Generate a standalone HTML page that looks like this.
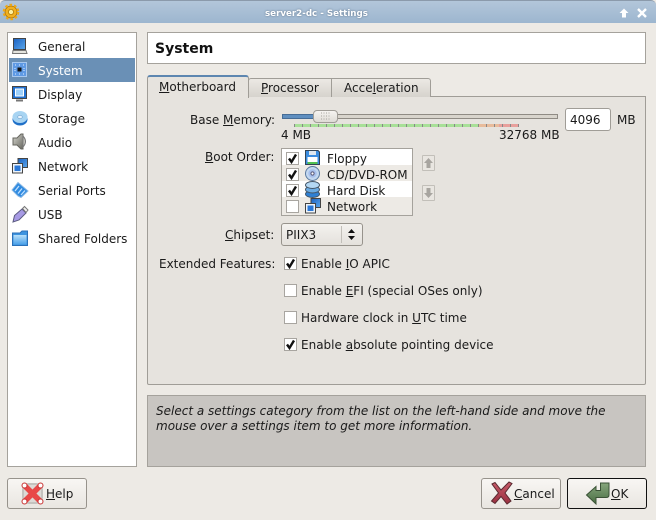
<!DOCTYPE html>
<html><head><meta charset="utf-8">
<style>
html,body{margin:0;padding:0}
body{width:656px;height:520px;position:relative;overflow:hidden;background:#edeae5;font-family:"DejaVu Sans",sans-serif;font-size:12px;color:#1a1a1a}
.a{position:absolute;white-space:nowrap;line-height:16px}
.b{position:absolute;box-sizing:border-box}
u{text-decoration:underline;text-underline-offset:1px}
svg{position:absolute;overflow:visible}
.cb{position:absolute;box-sizing:border-box;width:13px;height:13px;border:1px solid #a8a5a0;background:#fff}
.cb svg{left:0;top:0}
.btn{position:absolute;box-sizing:border-box;height:31px;width:80px;top:478px;border:1px solid #97938c;border-radius:3px;background:linear-gradient(#f8f6f3,#e9e6e1)}
</style></head><body>
<svg width="0" height="0" style="left:0;top:0"><defs>
<linearGradient id="bl" x1="0" y1="0" x2="0" y2="1"><stop offset="0" stop-color="#8cc4f4"/><stop offset="1" stop-color="#1668c8"/></linearGradient>
<linearGradient id="bl2" x1="0" y1="0" x2="1" y2="1"><stop offset="0" stop-color="#1a60c0"/><stop offset="1" stop-color="#5ca8ec"/></linearGradient>
<linearGradient id="gr" x1="0" y1="0" x2="1" y2="1"><stop offset="0" stop-color="#d8d8d0"/><stop offset="1" stop-color="#66665f"/></linearGradient>
<linearGradient id="fo" x1="0" y1="0" x2="0" y2="1"><stop offset="0" stop-color="#b8e0fa"/><stop offset="1" stop-color="#4aa0e8"/></linearGradient>
<linearGradient id="okg" x1="0" y1="0" x2="0" y2="1"><stop offset="0" stop-color="#86a67c"/><stop offset="1" stop-color="#4a6e44"/></linearGradient>
<linearGradient id="xr" x1="0" y1="0" x2="0" y2="1"><stop offset="0" stop-color="#c85a68"/><stop offset="1" stop-color="#983040"/></linearGradient>
</defs></svg>
<!-- title bar -->
<div class="b" style="left:0;top:0;width:656px;height:23px;background:linear-gradient(#b3c6da,#9db6cf);border-top:1px solid #8b9aab;border-radius:5px 5px 0 0"></div>
<div class="a" style="left:265px;top:7px;color:#fff;font-size:8.7px;font-weight:bold;line-height:14px;text-shadow:0 0 2px #5b7088">server2-dc - Settings</div>
<svg style="left:3px;top:4px" width="16" height="16" viewBox="0 0 16 16"><circle cx="8" cy="8" r="6" fill="#f0b020" stroke="#a86c00" stroke-width=".8"/><circle cx="8" cy="8" r="7.2" fill="none" stroke="#eca818" stroke-width="2.2" stroke-dasharray="2.6 2"/><circle cx="8" cy="8" r="2.6" fill="#fdf0a0" stroke="#b07800" stroke-width=".8"/></svg>
<svg style="left:619px;top:8px" width="10" height="10" viewBox="0 0 10 10"><path d="M5 .5L9.5 5H7V9.5H3V5H.5Z" fill="#fff"/></svg>
<svg style="left:637px;top:8px" width="10" height="10" viewBox="0 0 10 10"><path d="M1 1L9 9M9 1L1 9" stroke="#fff" stroke-width="2.4"/></svg>

<!-- left list -->
<div class="b" style="left:7px;top:32px;width:130px;height:435px;background:#fff;border:1px solid #a5a29c"></div>
<div class="b" style="left:9px;top:58px;width:126px;height:24px;background:#6a90b6"></div>
<div class="a" style="left:38px;top:39px">General</div>
<div class="a" style="left:38px;top:63px;color:#fff">System</div>
<div class="a" style="left:38px;top:87px">Display</div>
<div class="a" style="left:38px;top:111px">Storage</div>
<div class="a" style="left:38px;top:135px">Audio</div>
<div class="a" style="left:38px;top:159px">Network</div>
<div class="a" style="left:38px;top:183px">Serial Ports</div>
<div class="a" style="left:38px;top:207px">USB</div>
<div class="a" style="left:38px;top:231px">Shared Folders</div>
<!-- icons -->
<svg style="left:12px;top:38px" width="16" height="16" viewBox="0 0 16 16"><rect x="1.5" y=".5" width="12" height="11" fill="url(#bl2)" stroke="#444"/><path d="M1 12.5H14L15 15.5H.5Z" fill="#e4e4de" stroke="#777"/></svg>
<svg style="left:12px;top:62px" width="16" height="16" viewBox="0 0 16 16"><rect x=".5" y=".5" width="14" height="14" fill="#5f9ae4" stroke="#a8c8ee"/><rect x="5.5" y="5.5" width="4" height="4" fill="#111"/><path d="M3 3h2M7 3h2M11 3h1M3 12h2M7 12h2M11 12h1M3 6v4M12 6v4" stroke="#dfeeff" stroke-dasharray="1 1"/></svg>
<svg style="left:12px;top:86px" width="16" height="16" viewBox="0 0 16 16"><rect x=".5" y=".5" width="14" height="12" fill="#2070d0" stroke="#444"/><rect x="3.5" y="3" width="8" height="7" fill="#9ed0fa" stroke="#fff"/><path d="M4 14.5H11" stroke="#777" stroke-width="2"/></svg>
<svg style="left:12px;top:110px" width="16" height="16" viewBox="0 0 16 16"><ellipse cx="8" cy="9.5" rx="7.5" ry="6" fill="#1f70c8"/><ellipse cx="8" cy="7" rx="7.5" ry="6" fill="#a8d4f2"/><ellipse cx="8" cy="7" rx="2.2" ry="1.6" fill="#e8f4ff" stroke="#5a90c0" stroke-width=".5"/></svg>
<svg style="left:12px;top:133px" width="16" height="17" viewBox="0 0 16 17"><path d="M1 5H5L9 1H11V16H9L5 12H1Z" fill="url(#gr)" stroke="#66665f"/><path d="M11 3Q16 8.500 11 14Z" fill="#c8c8c0" stroke="#777"/></svg>
<svg style="left:12px;top:158px" width="16" height="16" viewBox="0 0 16 16"><rect x="6" y=".5" width="9.500" height="9" fill="url(#bl2)" stroke="#444"/><rect x=".5" y="5.500" width="10" height="9.500" fill="#eef4fa" stroke="#444"/><rect x="2.500" y="7.500" width="6" height="5.500" fill="#2a78d8"/></svg>
<svg style="left:12px;top:181px" width="17" height="18" viewBox="0 0 17 18"><path d="M0 9L6 1.500L16 10L9 16.500L6 15Z" fill="#2f8ae0" stroke="#8ab8e4"/><path d="M3 10L7 5M6 12.500L10 7.500M9 14L13 9.500" stroke="#bfe0ff" stroke-width="1.300"/></svg>
<svg style="left:12px;top:206px" width="16" height="17" viewBox="0 0 16 17"><path d="M1 16L2.500 9.500L10 3L14 7L7 14Z" fill="#a79ae4" stroke="#5a5a80"/><path d="M10.500 2.500L12.500 .5L16 4L14 6.500Z" fill="#f0f0f0" stroke="#777"/></svg>
<svg style="left:12px;top:230px" width="16" height="16" viewBox="0 0 16 16"><path d="M.5 3H8L10 1H15.500V15.500H.5Z" fill="#3d94e0" stroke="#2a70b8"/><rect x="1.500" y="5" width="13" height="9.500" fill="url(#fo)"/></svg>

<!-- header -->
<div class="b" style="left:147px;top:32px;width:499px;height:32px;background:#fff;border:1px solid #a5a29c"></div>
<div class="a" style="left:155px;top:41px;font-size:14px;font-weight:bold;color:#111">System</div>

<!-- tab panel -->
<div class="b" style="left:147px;top:96px;width:499px;height:289px;background:#e6e3de;border:1px solid #a09d97;border-radius:0 0 2px 2px"></div>
<div class="b" style="left:248px;top:78px;width:84px;height:19px;background:linear-gradient(#ece9e4,#d6d3cd);border:1px solid #a09d97;border-bottom:0;border-radius:3px 0 0 0"></div>
<div class="b" style="left:331px;top:78px;width:100px;height:19px;background:linear-gradient(#ece9e4,#d6d3cd);border:1px solid #a09d97;border-bottom:0;border-radius:0 3px 0 0"></div>
<div class="b" style="left:147px;top:75px;width:102px;height:23px;background:#e6e3de;border:1px solid #a09d97;border-top:2px solid #5d86b0;border-bottom:0;border-radius:3px 3px 0 0"></div>
<div class="a" style="left:159px;top:79px"><u>M</u>otherboard</div>
<div class="a" style="left:261px;top:80px"><u>P</u>rocessor</div>
<div class="a" style="left:344px;top:80px">Acce<u>l</u>eration</div>

<!-- memory -->
<div class="a" style="left:190px;top:112px">Base <u>M</u>emory:</div>
<div class="b" style="left:282px;top:114px;width:276px;height:5px;background:#d8d4cc;border:1px solid #8f8b84"></div>
<div class="b" style="left:282px;top:114px;width:34px;height:5px;background:#5f8fc0;border:1px solid #476d96"></div>
<div class="b" style="left:313px;top:110px;width:25px;height:13px;background:linear-gradient(#f6f4f1,#dedbd5);border:1px solid #a09d97;border-radius:4px"></div>
<svg style="left:320px;top:112px" width="10" height="9"><path d="M1 1h9M1 4h9M1 7h9" stroke="#a5a29c" stroke-dasharray="1 1.500"/></svg>
<div class="b" style="left:294px;top:124px;width:185px;height:3px;background:#a8e098"></div>
<div class="b" style="left:479px;top:124px;width:20px;height:3px;background:#e8bc9c"></div>
<div class="b" style="left:499px;top:124px;width:20px;height:3px;background:#e8a09c"></div>
<div class="b" style="left:294px;top:124px;width:225px;height:3px;background:repeating-linear-gradient(90deg,#888 0 1px,transparent 1px 8px)"></div>
<div class="a" style="left:281px;top:127px">4 MB</div>
<div class="a" style="left:499px;top:127px">32768 MB</div>
<div class="b" style="left:565px;top:108px;width:46px;height:23px;background:#fff;border:1px solid #a09d97;border-radius:3px"></div>
<div class="a" style="left:570px;top:112px">4096</div>
<div class="a" style="left:617px;top:112px">MB</div>

<!-- boot order -->
<div class="a" style="left:205px;top:149px"><u>B</u>oot Order:</div>
<div class="b" style="left:281px;top:148px;width:132px;height:68px;background:#fff;border:1px solid #a5a29c"></div>
<div class="b" style="left:282px;top:165px;width:130px;height:16px;background:#edeae5"></div>
<div class="b" style="left:282px;top:197px;width:130px;height:18px;background:#edeae5"></div>
<div class="cb" style="left:286px;top:152px"><svg width="11" height="11" viewBox="0 0 11 11"><path d="M2 5.500L4.500 9L9 1.500" fill="none" stroke="#111" stroke-width="2.400"/></svg></div>
<div class="cb" style="left:286px;top:168px"><svg width="11" height="11" viewBox="0 0 11 11"><path d="M2 5.500L4.500 9L9 1.500" fill="none" stroke="#111" stroke-width="2.400"/></svg></div>
<div class="cb" style="left:286px;top:184px"><svg width="11" height="11" viewBox="0 0 11 11"><path d="M2 5.500L4.500 9L9 1.500" fill="none" stroke="#111" stroke-width="2.400"/></svg></div>
<div class="cb" style="left:286px;top:200px"></div>
<svg style="left:305px;top:150px" width="15" height="15" viewBox="0 0 15 15"><path d="M.5.5H13L14.500 2V14.500H.5Z" fill="#3a8ce0" stroke="#345"/><rect x="4" y="1" width="7" height="4" fill="#dfe8f0"/><rect x="2.500" y="7" width="10" height="7" fill="#fff"/><rect x="2.500" y="12" width="10" height="2" fill="#50c050"/></svg>
<svg style="left:305px;top:166px" width="15" height="15" viewBox="0 0 15 15"><circle cx="7.500" cy="7.500" r="7" fill="#c4d8f0" stroke="#5a7aa0"/><circle cx="7.500" cy="7.500" r="4.200" fill="#a8c0ec"/><circle cx="7.500" cy="7.500" r="1.600" fill="#fff" stroke="#557"/></svg>
<svg style="left:305px;top:181px" width="15" height="17" viewBox="0 0 15 17"><ellipse cx="7.500" cy="13" rx="7" ry="3.500" fill="#2f80d4" stroke="#456"/><ellipse cx="7.500" cy="8.500" rx="7" ry="3.500" fill="#6cacE4" stroke="#456"/><ellipse cx="7.500" cy="4" rx="7" ry="3.500" fill="#b4d8f4" stroke="#456"/></svg>
<svg style="left:305px;top:198px" width="16" height="16" viewBox="0 0 16 16"><rect x="6" y=".5" width="9.500" height="9" fill="url(#bl2)" stroke="#444"/><rect x=".5" y="5.500" width="10" height="9.500" fill="#eef4fa" stroke="#444"/><rect x="2.500" y="7.500" width="6" height="5.500" fill="#2a78d8"/></svg>
<div class="a" style="left:327px;top:151px">Floppy</div>
<div class="a" style="left:327px;top:167px">CD/DVD-ROM</div>
<div class="a" style="left:327px;top:183px">Hard Disk</div>
<div class="a" style="left:327px;top:199px">Network</div>
<div class="b" style="left:422px;top:155px;width:13px;height:16px;background:#e9e6e1;border:1px solid #c2bfb9;border-radius:1px"></div>
<svg style="left:424px;top:158px" width="9" height="10" viewBox="0 0 9 10"><path d="M4.500 0L9 5H6.500V10H2.500V5H0Z" fill="#a8a5a0"/></svg>
<div class="b" style="left:422px;top:185px;width:13px;height:16px;background:#e9e6e1;border:1px solid #c2bfb9;border-radius:1px"></div>
<svg style="left:424px;top:188px" width="9" height="10" viewBox="0 0 9 10"><path d="M4.500 10L9 5H6.500V0H2.500V5H0Z" fill="#a8a5a0"/></svg>

<!-- chipset -->
<div class="a" style="left:225px;top:227px"><u>C</u>hipset:</div>
<div class="b" style="left:281px;top:223px;width:82px;height:23px;background:linear-gradient(#f4f2ef,#e4e1dc);border:1px solid #97938c;border-radius:3px"></div>
<div class="b" style="left:341px;top:226px;width:1px;height:17px;background:#c2bfb9"></div>
<svg style="left:347px;top:229px" width="9" height="11"><path d="M4.500 0L8 4H1ZM4.500 11L8 7H1Z" fill="#111"/></svg>
<div class="a" style="left:286px;top:227px">PIIX3</div>

<!-- extended -->
<div class="a" style="left:159px;top:256px">Extended Features:</div>
<div class="cb" style="left:284px;top:257px"><svg width="11" height="11" viewBox="0 0 11 11"><path d="M2 5.500L4.500 9L9 1.500" fill="none" stroke="#111" stroke-width="2.400"/></svg></div>
<div class="a" style="left:301px;top:256px">Enable <u>I</u>O APIC</div>
<div class="cb" style="left:284px;top:284px"></div>
<div class="a" style="left:301px;top:283px">Enable <u>E</u>FI (special OSes only)</div>
<div class="cb" style="left:284px;top:311px"></div>
<div class="a" style="left:301px;top:310px">Hardware clock in <u>U</u>TC time</div>
<div class="cb" style="left:284px;top:338px"><svg width="11" height="11" viewBox="0 0 11 11"><path d="M2 5.500L4.500 9L9 1.500" fill="none" stroke="#111" stroke-width="2.400"/></svg></div>
<div class="a" style="left:301px;top:337px">Enable <u>a</u>bsolute pointing device</div>

<!-- hint -->
<div class="b" style="left:147px;top:395px;width:499px;height:72px;background:#c8c5c1;border:1px solid #a5a29c"></div>
<div class="a" style="left:156px;top:404px;font-style:italic;line-height:15px">Select a settings category from the list on the left-hand side and move the<br>mouse over a settings item to get more information.</div>

<!-- buttons -->
<div class="btn" style="left:7px"></div>
<svg style="left:20px;top:481px" width="25" height="25" viewBox="0 0 25 25"><rect x="3" y="3" width="19" height="19" rx="6" fill="#dcdad6" stroke="#c4c2be" stroke-width="2"/><path d="M5 5L20 20M20 5L5 20" stroke="#e84848" stroke-width="5.500"/><circle cx="4.500" cy="4.500" r="2.500" fill="#fff" stroke="#c83030"/><circle cx="20.500" cy="4.500" r="2.500" fill="#fff" stroke="#c83030"/><circle cx="4.500" cy="20.500" r="2.500" fill="#fff" stroke="#c83030"/><circle cx="20.500" cy="20.500" r="2.500" fill="#fff" stroke="#c83030"/></svg>
<div class="a" style="left:46px;top:486px"><u>H</u>elp</div>
<div class="btn" style="left:481px"></div>
<svg style="left:490px;top:481px" width="24" height="24" viewBox="0 0 24 24"><path d="M2 3L5 1.500L11 9L19 1L22 2.500L15 12L21 20L17 23L11 15.500L5 22.500L1.500 20L8.500 12Z" fill="url(#xr)" stroke="#5a2a30"/></svg>
<div class="a" style="left:514px;top:486px"><u>C</u>ancel</div>
<div class="btn" style="left:567px;border-color:#111"></div>
<svg style="left:586px;top:481px" width="24" height="24" viewBox="0 0 24 24"><path d="M.5 14L10 5.500V9.500H14.500V2H23V14Q23 16.500 20 16.500H10V23Z" fill="url(#okg)" stroke="#3a5236"/></svg>
<div class="a" style="left:611px;top:486px"><u>O</u>K</div>
</body></html>
